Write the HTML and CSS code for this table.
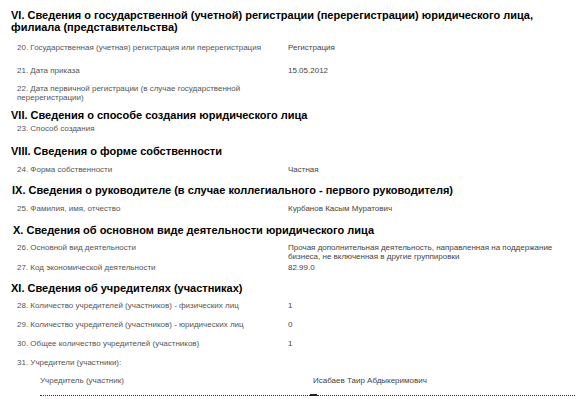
FILE: index.html
```html
<!DOCTYPE html>
<html lang="ru">
<head>
<meta charset="utf-8">
<title>Сведения</title>
<link rel="stylesheet" href="styles.css">
</head>
<body>
<div class="page">
  <h2 class="h-first">VI. Сведения о государственной (учетной) регистрации (перерегистрации) юридического лица, филиала (представительства)</h2>
  <div class="row mt10"><div class="label">20. Государственная (учетная) регистрация или перерегистрация</div><div class="value">Регистрация</div></div>
  <div class="row mt14"><div class="label">21. Дата приказа</div><div class="value">15.05.2012</div></div>
  <div class="row mt9"><div class="label">22. Дата первичной регистрации (в случае государственной перерегистрации)</div><div class="value"></div></div>

  <h2 class="mt7">VII. Сведения о способе создания юридического лица</h2>
  <div class="row mt3"><div class="label">23. Способ создания</div><div class="value"></div></div>

  <h2 class="mt12">VIII. Сведения о форме собственности</h2>
  <div class="row mt8"><div class="label">24. Форма собственности</div><div class="value">Частная</div></div>

  <h2 class="mt10 ind1">IX. Сведения о руководителе (в случае коллегиального - первого руководителя)</h2>
  <div class="row mt8"><div class="label">25. Фамилия, имя, отчество</div><div class="value">Курбанов Касым Муратович</div></div>

  <h2 class="mt11 ind2">X. Сведения об основном виде деятельности юридического лица</h2>
  <div class="row mt7"><div class="label">26. Основной вид деятельности</div><div class="value">Прочая дополнительная деятельность, направленная на поддержание бизнеса, не включенная в другие группировки</div></div>
  <div class="row mt2"><div class="label">27. Код экономической деятельности</div><div class="value">82.99.0</div></div>

  <h2 class="mt10">XI. Сведения об учредителях (участниках)</h2>
  <div class="row mt7"><div class="label">28. Количество учредителей (участников) - физических лиц</div><div class="value">1</div></div>
  <div class="row mt10"><div class="label">29. Количество учредителей (участников) - юридических лиц</div><div class="value">0</div></div>
  <div class="row mt10"><div class="label">30. Общее количество учредителей (участников)</div><div class="value">1</div></div>
  <div class="row mt10"><div class="label">31. Учредители (участники):</div><div class="value"></div></div>
  <div class="founder mt9"><div class="label">Учредитель (участник)</div><div class="value">Исабаев Таир Абдыкеримович</div></div>
  <div class="divider"><span class="dots dots-left"></span><span class="dash"></span><span class="dots dots-right"></span></div>
</div>
</body>
</html>
```
FILE: styles.css
```css
html, body {
  margin: 0;
  padding: 0;
  background: #ffffff;
}
body {
  font-family: "Liberation Sans", Arial, sans-serif;
  color: #000;
}
.page {
  padding: 0 30px 0 11px;
}
h2 {
  font-size: 11px;
  line-height: 12px;
  font-weight: bold;
  color: #000;
  margin: 0;
}
.h-first {
  padding-top: 9px;
}
.ind1 { padding-left: 1px; }
.ind2 { padding-left: 2px; }
.row {
  display: grid;
  grid-template-columns: 271px 270px;
  padding-left: 6px;
  font-size: 8px;
  line-height: 9px;
}
.label {
  color: #555;
  padding-right: 8px;
}
.value {
  color: #444;
}
.founder {
  display: grid;
  grid-template-columns: 273px 1fr;
  padding-left: 29px;
  font-size: 8px;
  line-height: 9px;
}
.divider {
  display: flex;
  align-items: flex-end;
  margin: 9px 0 0 29px;
  width: 535px;
  height: 2px;
}
.dots {
  border-bottom: 1px dotted #333;
  height: 0;
}
.dots-left { width: 270px; }
.dash {
  width: 7px;
  border-bottom: 2px solid #222;
}
.dots-right { flex: 1; }
.mt2 { margin-top: 2px; }
.mt3 { margin-top: 3px; }
.mt7 { margin-top: 7px; }
.mt8 { margin-top: 8px; }
.mt9 { margin-top: 9px; }
.mt10 { margin-top: 10px; }
.mt11 { margin-top: 11px; }
.mt12 { margin-top: 12px; }
.mt14 { margin-top: 14px; }
```
